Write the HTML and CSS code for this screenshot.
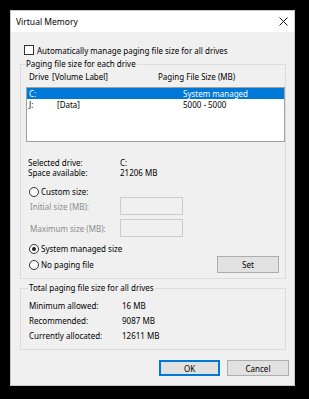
FILE: index.html
```html
<!DOCTYPE html>
<html lang="en">
<head>
  <meta charset="UTF-8">
  <title>Virtual Memory</title>
  <link rel="stylesheet" href="styles.css">
</head>
<body>

  <div class="window">
    <!-- Title bar -->
    <div class="titlebar">
      <span class="title">Virtual Memory</span>
      <svg class="close" width="9" height="9" viewBox="0 0 9 9">
        <path d="M0.5 0.5 L8.5 8.5 M8.5 0.5 L0.5 8.5" stroke="#111" stroke-width="1" fill="none"/>
      </svg>
    </div>

    <div class="content">
      <label class="check-row">
        <span class="checkbox"></span>
        <span>Automatically manage paging file size for all drives</span>
      </label>

      <!-- Paging file per drive -->
      <fieldset class="group group-drives">
        <legend>Paging file size for each drive</legend>

        <div class="list-head">
          <span class="col-drive">Drive</span>
          <span class="col-label">[Volume Label]</span>
          <span class="col-size">Paging File Size (MB)</span>
        </div>

        <div class="listbox">
          <div class="list-row selected">
            <span class="cell-drive">C:</span>
            <span class="cell-label"></span>
            <span class="cell-size">System managed</span>
          </div>
          <div class="list-row">
            <span class="cell-drive">J:</span>
            <span class="cell-label">[Data]</span>
            <span class="cell-size">5000 - 5000</span>
          </div>
        </div>

        <div class="info">
          <div class="info-row"><span class="info-key">Selected drive:</span><span>C:</span></div>
          <div class="info-row"><span class="info-key">Space available:</span><span>21206 MB</span></div>
        </div>

        <div class="radio-row custom">
          <span class="radio"></span>
          <span>Custom size:</span>
        </div>

        <div class="size-row">
          <span class="size-key">Initial size (MB):</span>
          <span class="textbox"></span>
        </div>
        <div class="size-row second">
          <span class="size-key">Maximum size (MB):</span>
          <span class="textbox"></span>
        </div>

        <div class="choice-row">
          <div class="choice-list">
            <div class="radio-row">
              <span class="radio checked"></span>
              <span>System managed size</span>
            </div>
            <div class="radio-row nopage">
              <span class="radio"></span>
              <span>No paging file</span>
            </div>
          </div>
          <button class="btn btn-set">Set</button>
        </div>
      </fieldset>

      <!-- Totals -->
      <fieldset class="group group-total">
        <legend>Total paging file size for all drives</legend>
        <div class="total-row"><span class="total-key">Minimum allowed:</span><span>16 MB</span></div>
        <div class="total-row"><span class="total-key">Recommended:</span><span>9087 MB</span></div>
        <div class="total-row"><span class="total-key">Currently allocated:</span><span>12611 MB</span></div>
      </fieldset>

      <div class="actions">
        <button class="btn btn-ok">OK</button>
        <button class="btn">Cancel</button>
      </div>
    </div>
  </div>

</body>
</html>
```

FILE: styles.css
```css
/* Page */
body {
  margin: 0;
  padding: 10px;
  background: #000;
  font-family: 'Noto Sans', sans-serif;
  font-size: 8px;
  color: #000;
}

/* Dialog window */
.window {
  width: 283px;
  height: 374px;
  border: 1px solid #c9c9c9;
  background: #f0f0f0;
  display: flex;
  flex-direction: column;
}

.titlebar {
  height: 21px;
  background: #fff;
  display: flex;
  align-items: center;
  justify-content: space-between;
  padding: 0 6px 0 5px;
}

.title {
  font-size: 8.5px;
}

.close {
  display: block;
  margin-top: -1px;
}

.content {
  padding: 13px 0 0 9px;
}

/* Checkbox row */
.check-row {
  display: flex;
  align-items: center;
  height: 10px;
  margin-left: 4px;
  gap: 3px;
}

.checkbox {
  width: 8px;
  height: 8px;
  border: 1px solid #333;
  background: #fff;
}

/* Group boxes */
.group {
  margin: 4px 0 0;
  width: 266px;
  box-sizing: border-box;
  border: 1px solid #dcdcdc;
  padding: 3px 0 5px 5px;
  min-inline-size: 0;
}

.group legend {
  padding: 0 1px;
  margin-left: -1px;
  line-height: 10px;
  height: 10px;
}

/* Drive list */
.list-head {
  display: flex;
  height: 10px;
  line-height: 10px;
  padding-left: 3px;
}

.col-drive { width: 23px; }
.col-label { width: 106px; }

.listbox {
  margin-top: 5px;
  height: 53px;
  border: 1px solid #a0a0a0;
  background: #fff;
}

.list-row {
  display: flex;
  height: 11px;
  line-height: 11px;
  padding-left: 2px;
}

.list-row.selected {
  background: #0078d7;
  color: #fff;
}

.cell-drive { width: 28px; }
.cell-label { width: 126px; }

/* Selected drive info */
.info {
  margin-top: 16px;
  padding-left: 2px;
}

.info-row {
  display: flex;
  height: 10px;
  line-height: 10px;
}

.info-key { width: 92px; }

/* Radio buttons */
.radio-row {
  display: flex;
  align-items: center;
  gap: 2px;
  height: 10px;
  line-height: 10px;
  padding-left: 3px;
}

.radio-row.custom { margin-top: 9px; }
.radio-row.nopage { margin-top: 6px; }

.radio {
  width: 8px;
  height: 8px;
  border: 1px solid #333;
  border-radius: 50%;
  background: #fff;
  display: flex;
  align-items: center;
  justify-content: center;
}

.radio.checked::after {
  content: "";
  width: 4px;
  height: 4px;
  border-radius: 50%;
  background: #222;
}

/* Custom size inputs (disabled) */
.size-row {
  display: flex;
  align-items: center;
  height: 18px;
  padding-left: 4px;
  color: #8c8c8c;
}

.size-row.second { margin-top: 4px; }

.size-key { width: 90px; }

.textbox {
  width: 61px;
  height: 16px;
  border: 1px solid #cccccc;
  background: #f0f0f0;
}

.choice-row {
  display: flex;
  justify-content: space-between;
  margin-top: 7px;
  height: 29px;
}

.choice-list {
  display: flex;
  flex-direction: column;
}

/* Buttons */
.btn {
  font-family: 'Noto Sans', sans-serif;
  font-size: 8px;
  color: #000;
  background: #e1e1e1;
  border: 1px solid #adadad;
  padding: 0;
  height: 17px;
  width: 62px;
}

.btn-set {
  align-self: flex-end;
  margin-right: 6px;
}

.btn-ok {
  border-color: #0078d7;
  box-shadow: inset 0 0 0 1px #0078d7;
  width: 61px;
}

/* Totals */
.group-total {
  padding: 5px 0 6px 8px;
}

.total-row {
  display: flex;
  height: 15px;
  line-height: 15px;
}

.total-key { width: 93px; }

.actions {
  display: flex;
  justify-content: flex-end;
  gap: 7px;
  margin-top: 10px;
  width: 269px;
}

.actions .btn {
  height: 16px;
}
```
